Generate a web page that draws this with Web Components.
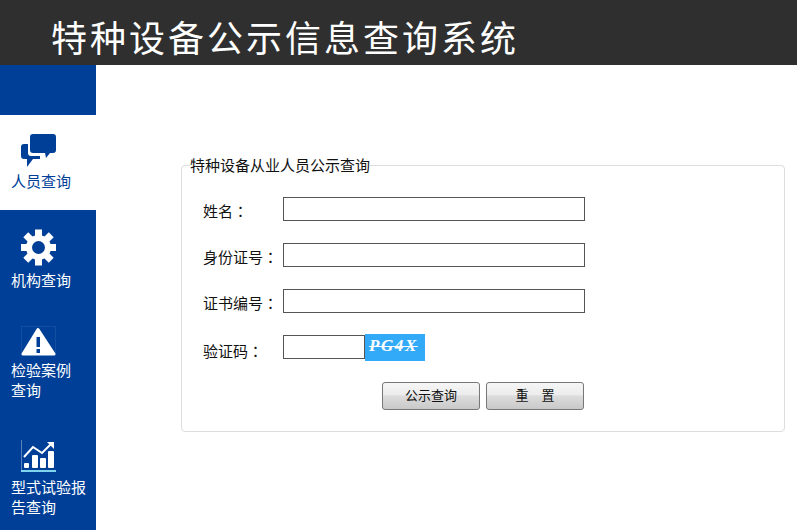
<!DOCTYPE html>
<html lang="zh">
<head>
<meta charset="utf-8">
<title>特种设备公示信息查询系统</title>
<style>
html,body{margin:0;padding:0;background:#fff;height:100%;overflow:hidden}
body{font-family:"Noto Sans CJK SC","Liberation Sans",sans-serif;display:flex;flex-direction:column;height:530px}
.body{display:flex;flex:1;min-height:0}
</style>
</head>
<body>
<app-header>特种设备公示信息查询系统</app-header>
<div class="body">
<side-nav>
  <nav-item active style="--after:3px;--bottom:19px">
    <svg slot="icon" width="35" height="34" viewBox="0 0 35 34">
      <path fill="#003f98" d="M12 0H32Q35 0 35 3V16Q35 19 32 19H29L25 24L24 19H12Q9 19 9 16V3Q9 0 12 0Z"/>
      <path fill="#003f98" d="M7 10H3Q0 10 0 13V22Q0 25 3 25H6V33L12 25H19V22H10Q7 22 7 19Z"/>
    </svg>
    人员查询
  </nav-item>
  <nav-item style="--after:3px;--bottom:17px">
    <svg slot="icon" width="35" height="38" viewBox="0 0 35 38">
      <g transform="translate(17.5 18.5)" fill="#fff">
        <circle r="9.5" fill="none" stroke="#fff" stroke-width="6"/>
        <rect x="-3.5" y="-18" width="7" height="36"/>
        <rect x="-3.5" y="-18" width="7" height="36" transform="rotate(45)"/>
        <rect x="-3.5" y="-18" width="7" height="36" transform="rotate(90)"/>
        <rect x="-3.5" y="-18" width="7" height="36" transform="rotate(135)"/>
        <circle r="6.5" fill="#003f98"/>
      </g>
    </svg>
    机构查询
  </nav-item>
  <nav-item style="--after:2px;--bottom:20px">
    <svg slot="icon" width="35" height="32" viewBox="0 0 35 32">
      <path d="M.5 30V.5H34.5V30" fill="none" stroke="#fff" stroke-opacity=".08"/>
      <path fill="#fff" stroke="#fff" stroke-width="3" stroke-linejoin="round" d="M17 3.5L33 28H2Z"/>
      <rect x="15.5" y="11" width="3.5" height="10" fill="#003f98"/>
      <rect x="15.5" y="23" width="3.5" height="4" fill="#003f98"/>
    </svg>
    检验案例<br>查询
  </nav-item>
  <nav-item style="--after:2px;--bottom:13px">
    <svg slot="icon" width="35" height="36" viewBox="0 0 35 36">
      <path d="M.5 1V31" stroke="#fff" stroke-opacity=".35" fill="none"/>
      <path d="M0 32H35" stroke="#7fd4f0" stroke-width="2" fill="none"/>
      <g fill="#fff">
        <rect x="3" y="24" width="5" height="5" rx="1"/>
        <rect x="11" y="16" width="6" height="13" rx="1"/>
        <rect x="19" y="19" width="6" height="10" rx="1"/>
        <rect x="27" y="12" width="6" height="17" rx="1"/>
      </g>
      <path d="M3 18L12 8L21 14L30 5" stroke="#fff" stroke-width="2" fill="none"/>
      <path d="M26 3H33V10Z" fill="#fff"/>
    </svg>
    型式试验报<br>告查询
  </nav-item>
</side-nav>
<query-panel legend="特种设备从业人员公示查询">
  <form-row label="姓名"></form-row>
  <form-row label="身份证号"></form-row>
  <form-row label="证书编号"></form-row>
  <form-row label="验证码" short><captcha-box>PG4X</captcha-box></form-row>
  <button-bar>
    <ui-button>公示查询</ui-button>
    <ui-button>重　置</ui-button>
  </button-bar>
</query-panel>
</div>
<script>
function def(name, html, setup){
  customElements.define(name, class extends HTMLElement{
    constructor(){
      super();
      const r = this.attachShadow({mode:"open"});
      r.innerHTML = html;
    }
    connectedCallback(){ if(setup) setup(this, this.shadowRoot); }
  });
}
def("app-header", `<style>
:host{display:block;height:65px;flex:none;background:#2f2f2f;color:#fff;box-sizing:border-box;padding-left:51px;
font-size:36px;line-height:72px;letter-spacing:3px;white-space:nowrap;overflow:hidden}
</style><slot></slot>`);
def("side-nav", `<style>
:host{display:block;width:96px;flex:none;background:#003f98;padding-top:50px;box-sizing:border-box}
</style><slot></slot>`);
def("nav-item", `<style>
:host{display:block;color:#fff;font-size:15px;line-height:20px;padding:19px 0 var(--bottom) 11px}
:host([active]){background:#fff;color:#003f98}
.icon{display:block;margin:0 0 var(--after) 10px;line-height:0}
</style><div class="icon"><slot name="icon"></slot></div><slot></slot>`);
def("query-panel", `<style>
:host{display:block;flex:1;min-width:0;padding:90px 12px 0 85px}
fieldset{margin:0;padding:0 0 21px 0;border:1px solid #ddd;border-radius:4px;min-width:0}
legend{margin-left:8px;padding:0;font-size:15px;line-height:20px;color:#111}
.rows{display:flex;flex-direction:column;gap:22px;padding:22px 0 0 21px}
</style><fieldset><legend></legend><div class="rows"><slot></slot></div></fieldset>`,
(el,r)=>{r.querySelector("legend").textContent=el.getAttribute("legend");});
def("form-row", `<style>
:host{display:flex;height:24px;align-items:flex-start}
label{width:80px;flex:none;font-size:15px;line-height:24px;padding-top:2px;color:#111}
:host([short]) label{padding-top:4px}
.colon{font-family:"Noto Sans CJK TC",sans-serif}
input{box-sizing:border-box;width:302px;height:24px;margin:0;padding:0 2px;border:1px solid #555;background:#fff;outline:none;border-radius:0}
:host([short]) input{width:82px}
</style><label><span class="t"></span><span class="colon" lang="zh-TW">：</span></label><input type="text"><slot></slot>`,
(el,r)=>{r.querySelector(".t").textContent=el.getAttribute("label");});
def("captcha-box", `<style>
:host{display:block;width:60px;height:27px;margin-top:-1px;box-sizing:border-box;padding-left:4px;
background-color:#33aaf8;background-image:radial-gradient(#5cbcfc 35%,transparent 40%);background-size:2px 2px;
color:#fff;font:italic bold 17px/23px "Liberation Serif",serif;letter-spacing:1.6px;text-decoration:line-through;text-decoration-thickness:1px}
</style><slot></slot>`);
def("button-bar", `<style>
:host{display:flex;gap:6px;padding-left:179px;margin-top:1px}
</style><slot></slot>`);
def("ui-button", `<style>
:host{display:block}
button{display:block;box-sizing:border-box;width:98px;height:28px;padding:0 0 2px;border:1px solid #777;border-radius:3px;
background:linear-gradient(#f6f6f6 0,#ececec 45%,#dcdcdc 50%,#c9c9c9 100%);font:13px/24px "Noto Sans CJK SC",sans-serif;color:#111}
</style><button type="button"><slot></slot></button>`);
</script>
</body>
</html>
